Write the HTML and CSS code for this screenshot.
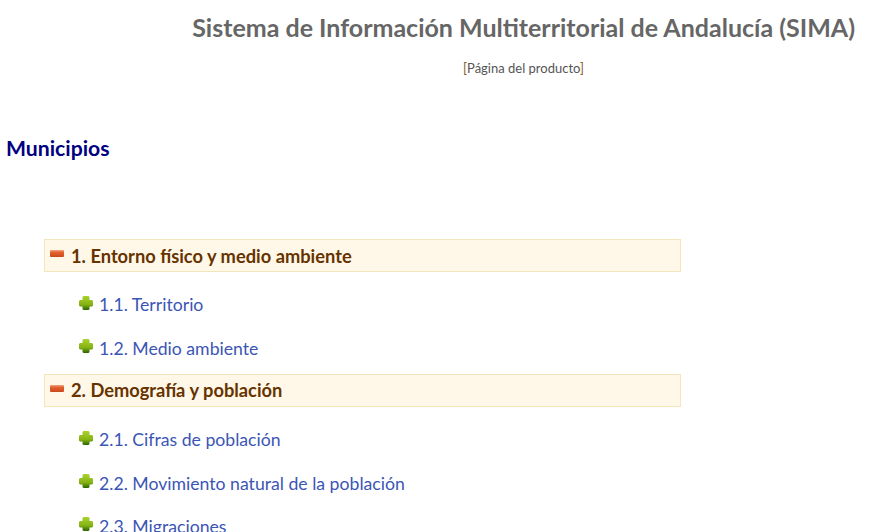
FILE: index.html
```html
<!DOCTYPE html>
<html lang="es">
<head>
  <meta charset="UTF-8" />
  <title>Sistema de Información Multiterritorial de Andalucía (SIMA)</title>
  <link rel="stylesheet" href="styles.css">
</head>
<body>
  <svg class="defs" width="0" height="0">
    <defs>
      <linearGradient id="minus-fill" x1="0" y1="0" x2="0" y2="1">
        <stop offset="0" stop-color="#f4a37e"/>
        <stop offset="0.35" stop-color="#e2622f"/>
        <stop offset="1" stop-color="#c9481c"/>
      </linearGradient>
      <linearGradient id="plus-fill" x1="0" y1="0" x2="0" y2="1">
        <stop offset="0" stop-color="#a9d22f"/>
        <stop offset="0.6" stop-color="#86b414"/>
        <stop offset="1" stop-color="#2c6400"/>
      </linearGradient>
      <symbol id="minus" viewBox="0 0 14 14">
        <rect x="0" y="3" width="14" height="7" rx="1" fill="url(#minus-fill)"/>
      </symbol>
      <symbol id="plus" viewBox="0 0 14 14">
        <path d="M4.5 0h5l1 1v3h2.5l1 1v4.500l-1 1h-2.500v2.500l-1 1h-5l-1-1v-2.500H1l-1-1V5l1-1h2.500V1z" fill="url(#plus-fill)"/>
      </symbol>
    </defs>
  </svg>
  <header class="page-head">
    <h1>Sistema de Información Multiterritorial de Andalucía (SIMA)</h1>
    <p class="product-link">[<a href="#">Página del producto</a>]</p>
  </header>
  <h2 class="section-title">Municipios</h2>
  <div class="tree">
    <div class="group">
      <svg class="icon minus"><use href="#minus"/></svg>
      <span>1. Entorno físico y medio ambiente</span>
    </div>
    <ul class="items">
      <li><svg class="icon plus"><use href="#plus"/></svg><a href="#">1.1. Territorio</a></li>
      <li><svg class="icon plus"><use href="#plus"/></svg><a href="#">1.2. Medio ambiente</a></li>
    </ul>
    <div class="group">
      <svg class="icon minus"><use href="#minus"/></svg>
      <span>2. Demografía y población</span>
    </div>
    <ul class="items">
      <li><svg class="icon plus"><use href="#plus"/></svg><a href="#">2.1. Cifras de población</a></li>
      <li><svg class="icon plus"><use href="#plus"/></svg><a href="#">2.2. Movimiento natural de la población</a></li>
      <li><svg class="icon plus"><use href="#plus"/></svg><a href="#">2.3. Migraciones</a></li>
    </ul>
  </div>
</body>
</html>
```

FILE: styles.css
```css
* { box-sizing: border-box; margin: 0; padding: 0; }
html, body { height: 532px; overflow: hidden; }
body {
  font-family: 'Lato', 'Noto Sans', sans-serif;
  background: #fff;
  color: #333;
}
.defs { position: absolute; }
.page-head { padding-top: 11px; }
.page-head h1 {
  font-size: 25px;
  line-height: 33px;
  font-weight: 700;
  color: #666;
  text-align: right;
  padding-right: 27px;
}
.product-link {
  font-size: 13px;
  line-height: 18px;
  color: #8a5a20;
  text-align: center;
  margin-top: 15px;
  padding-left: 165px;
}
.product-link a { color: #555; text-decoration: none; }
.section-title {
  font-size: 21.2px;
  line-height: 28px;
  font-weight: 700;
  color: #000080;
  margin: 57px 0 0 6px;
}
.tree { margin: 77px 0 0 44px; width: 637px; }
.group {
  display: flex;
  align-items: center;
  gap: 7px;
  height: 33px;
  padding-left: 5px;
  background: #fff8e8;
  border: 1px solid #f3e6bd;
  font-size: 18.3px;
  line-height: 24px;
  font-weight: 700;
  color: #663300;
}
.icon { width: 14px; height: 14px; flex: none; }
.minus { margin-top: -3px; }
.plus { margin-top: -4px; }
.items { list-style: none; padding: 11px 0 4.2px 35px; }
.items li {
  display: flex;
  align-items: center;
  gap: 6px;
  height: 43.4px;
  font-size: 17.65px;
}
.items a { color: #3b55b5; text-decoration: none; }
```
